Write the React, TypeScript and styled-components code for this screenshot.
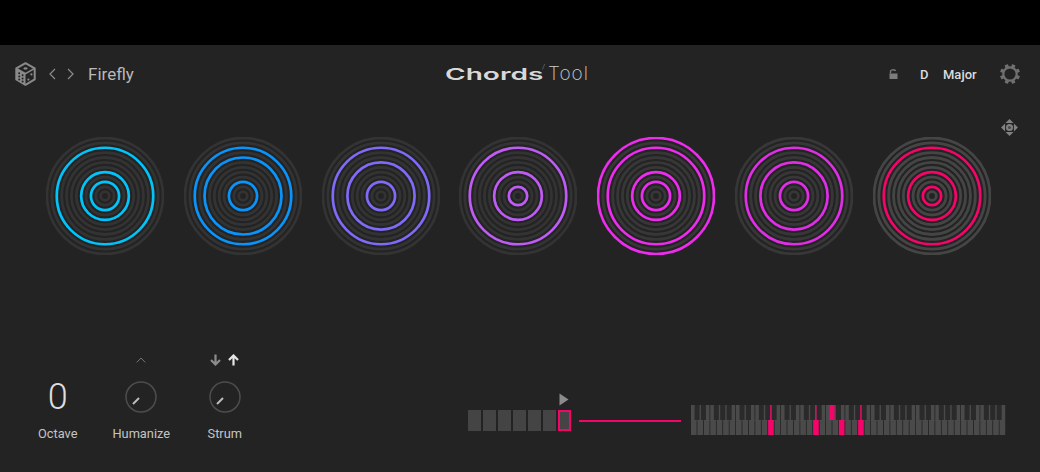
import { FC } from "react";
import styled, { createGlobalStyle } from "styled-components";

const PINK = "#f5056a";

const chords = [
    { color: "#00c4fa", active: [2, 7, 9], base: "#333333" },
    { color: "#0a94fb", active: [2, 4, 9], base: "#333333" },
    { color: "#7e6bf7", active: [2, 5, 9], base: "#333333" },
    { color: "#bf5cf5", active: [2, 7, 10], base: "#333333" },
    { color: "#ee2cee", active: [0, 2, 7, 9], base: "#373737" },
    { color: "#e02ee6", active: [2, 5, 9], base: "#373737" },
    { color: "#f5056a", active: [2, 7, 10], base: "#454545" },
];

const GlobalStyle = createGlobalStyle`
    html, body {
        margin: 0;
        padding: 0;
        background: #000;
        font-family: Roboto, "Liberation Sans", sans-serif;
    }
`;

const Page = styled.div`
    width: 1040px;
    height: 472px;
    padding-top: 45px;
    box-sizing: border-box;
    background: #000;
    overflow: hidden;
`;

const Panel = styled.div`
    height: 427px;
    background: #232323;
    display: flex;
    flex-direction: column;
`;

const Header = styled.header`
    height: 58px;
    display: grid;
    grid-template-columns: 1fr auto 1fr;
    align-items: center;
    padding: 0 20px 0 15px;
`;

const HeaderLeft = styled.div`
    display: flex;
    align-items: center;
`;

const HeaderRight = styled.div`
    display: flex;
    align-items: center;
    justify-content: flex-end;
`;

const NavGroup = styled.div`
    display: flex;
    align-items: center;
    gap: 11px;
    margin: 0 14px 0 13px;
`;

const PresetName = styled.span`
    font-size: 17px;
    color: #b9b9b9;
`;

const Logo = styled.div`
    display: flex;
    align-items: flex-start;
    color: #d8d8d8;
    line-height: 18px;
`;

const LogoBold = styled.span`
    display: inline-block;
    width: 97px;
    margin-left: -1px;
    font-family: Inter, sans-serif;
    font-weight: 600;
    font-size: 16.5px;
    transform: scaleX(1.7);
    transform-origin: left center;
`;

const LogoSlash = styled.span`
    font-size: 8px;
    font-weight: 300;
    line-height: 8px;
    width: 6px;
    color: #999;
    margin-top: -2px;
`;

const LogoLight = styled.span`
    font-family: Inter, sans-serif;
    font-weight: 200;
    font-size: 19px;
    letter-spacing: 1px;
    color: #cccccc;
`;

const KeyName = styled.span<{ $width: number }>`
    font-size: 13px;
    font-weight: 500;
    color: #dcdcdc;
    width: ${(p) => p.$width}px;
`;

const MoveRow = styled.div`
    height: 34px;
    display: flex;
    justify-content: flex-end;
    padding: 16px 22px 0 0;
    box-sizing: border-box;
`;

const Rings = styled.div`
    display: flex;
    gap: 19.83px;
    padding-left: 46px;
`;

const Bottom = styled.div`
    margin-top: auto;
    height: 122px;
    display: flex;
    justify-content: space-between;
    padding: 0 33px 0 16px;
`;

const Controls = styled.div`
    display: flex;
`;

const Control = styled.div`
    width: 83.5px;
    display: flex;
    flex-direction: column;
    align-items: center;
`;

const Indicator = styled.div`
    height: 16px;
    margin-top: 2px;
    display: flex;
    align-items: center;
    gap: 7px;
`;

const ValueArea = styled.div`
    height: 44px;
    margin-top: 7px;
    display: flex;
    align-items: center;
    justify-content: center;
    font-size: 36px;
    font-weight: 300;
    color: #dedede;
`;

const Label = styled.div`
    margin-top: 7px;
    font-size: 12.8px;
    color: #c4c4c4;
    line-height: 16px;
`;

const Sequencer = styled.div`
    display: flex;
    flex-direction: column;
    align-items: flex-start;
`;

const PlayRow = styled.div`
    display: flex;
    justify-content: flex-end;
    width: 101px;
    height: 13px;
    margin-top: 43px;
    margin-bottom: 4px;
`;

const StepRow = styled.div`
    display: flex;
    gap: 2px;
`;

const Step = styled.div<{ $current?: boolean }>`
    width: 13px;
    height: 21px;
    box-sizing: border-box;
    background: #444;
    border: ${(p) => (p.$current ? `2px solid ${PINK}` : "none")};
`;

const RightGroup = styled.div`
    display: flex;
`;

const Connector = styled.div`
    width: 102px;
    height: 1.5px;
    margin: 70px 10px 0 8px;
    background: ${PINK};
`;

const KeyboardWrap = styled.div`
    padding-top: 55px;
`;

const Ring: FC<{ color: string; active: number[]; base: string }> = ({ color, active, base }) => {
    const radii = Array.from({ length: 12 }, (_, i) => 58 - i * 4.88);
    return (
        <svg width="118" height="118" viewBox="-59 -59 118 118">
            {radii.map((r, i) => (
                <circle
                    key={i}
                    r={r}
                    fill="none"
                    stroke={active.includes(i) ? color : base}
                    strokeWidth={active.includes(i) ? 2.7 : 2.8}
                />
            ))}
        </svg>
    );
};

const Dice = () => (
    <svg width="21" height="24" viewBox="0 0 21 24">
        <path d="M1.3 6.4 L10.5 11.6 V22.8 L1.3 17.4 Z" fill="#8a8a8a" />
        <path d="M10.5 1.2 L19.7 6.4 V17.4 L10.5 22.8 L1.3 17.4 V6.4 Z" fill="none" stroke="#8a8a8a" strokeWidth="2" strokeLinejoin="round" />
        <path d="M1.3 6.4 L10.5 11.6 L19.7 6.4" fill="none" stroke="#8a8a8a" strokeWidth="1.6" />
        <ellipse cx="10.5" cy="6.4" rx="2" ry="1.2" fill="#8a8a8a" />
        <circle cx="4.2" cy="11.2" r="1" fill="#232323" />
        <circle cx="7.6" cy="13.2" r="1" fill="#232323" />
        <circle cx="4.2" cy="14.4" r="1" fill="#232323" />
        <circle cx="7.6" cy="16.4" r="1" fill="#232323" />
        <circle cx="4.2" cy="17.4" r="1" fill="#232323" />
        <circle cx="7.6" cy="19.4" r="1" fill="#232323" />
        <circle cx="16.4" cy="12.4" r="1.1" fill="#8a8a8a" />
        <circle cx="13.4" cy="17.6" r="1.1" fill="#8a8a8a" />
    </svg>
);

const Chevron: FC<{ dir: "left" | "right" }> = ({ dir }) => (
    <svg width="7" height="12" viewBox="0 0 7 12">
        <path d={dir === "left" ? "M6 1 L1 6 L6 11" : "M1 1 L6 6 L1 11"} fill="none" stroke="#8c8c8c" strokeWidth="1.2" />
    </svg>
);

const Lock = () => (
    <svg width="9" height="10" viewBox="0 0 9 10" style={{ marginRight: 22 }}>
        <rect x="0.5" y="4.5" width="8" height="5.5" fill="#7c7c7c" />
        <path d="M1.5 4.5 V2.4 C1.5 0.4 6 0.2 6.6 2" fill="none" stroke="#7c7c7c" strokeWidth="1.3" />
    </svg>
);

const Gear = () => {
    const teeth = Array.from({ length: 8 }, (_, i) => i * 45);
    return (
        <svg width="20" height="20" viewBox="-10 -10 20 20" style={{ marginLeft: 23 }}>
            <circle r="6.7" fill="none" stroke="#707070" strokeWidth="2.2" />
            {teeth.map((a) => (
                <rect key={a} x="-1.8" y="-10" width="3.6" height="3" rx="0.5" fill="#707070" transform={`rotate(${a + 22.5})`} />
            ))}
        </svg>
    );
};

const Move = () => (
    <svg width="17" height="17" viewBox="-8.5 -8.5 17 17">
        <path d="M0 -8.4 L4 -4.4 H-4 Z M0 8.4 L4 4.4 H-4 Z M-8.4 0 L-4.4 -4 V4 Z M8.4 0 L4.4 -4 V4 Z" fill="#828282" />
        <circle r="3.5" fill="#828282" />
        <circle r="1.6" fill="#4a4a4a" />
    </svg>
);

const Knob = () => (
    <svg width="32" height="32" viewBox="-16 -16 32 32">
        <circle r="15" fill="none" stroke="#4d4d4d" strokeWidth="1.5" />
        <line x1="-8" y1="7" x2="-2" y2="1" stroke="#bdbdbd" strokeWidth="2" />
    </svg>
);

const Arrow: FC<{ up?: boolean; color: string }> = ({ up, color }) => (
    <svg width="11" height="12" viewBox="0 0 11 12">
        <path
            d={up ? "M5.5 11.5 V1.5 M1 6 L5.5 1.5 L10 6" : "M5.5 0.5 V10.5 M1 6 L5.5 10.5 L10 6"}
            fill="none"
            stroke={color}
            strokeWidth="2.2"
        />
    </svg>
);

// blacks sit after these white indexes inside an octave
const BLACK_AFTER = [0, 1, 3, 4, 5];
const PINK_WHITES = [12, 19, 23, 26];
const PINK_TOPS = [12, 19, 26];
const PINK_BLACKS = [21];

const Keyboard = () => {
    const w = 315 / 49;
    const whites = Array.from({ length: 49 }, (_, i) => i);
    const blacks = whites.filter((i) => BLACK_AFTER.includes(i % 7));
    return (
        <svg width="316" height="31" viewBox="0 0 316 31">
            {whites.map((i) => (
                <g key={i}>
                    <rect x={i * w} y={0} width={w - 0.8} height={16} fill="#4a4a4a" />
                    <rect x={i * w} y={15} width={w - 0.8} height={15} fill={PINK_WHITES.includes(i) ? PINK : "#4a4a4a"} />
                </g>
            ))}
            {blacks.map((i) => (
                <rect
                    key={i}
                    x={(i + 1) * w - 2.9}
                    y={0}
                    width={5}
                    height={15}
                    fill={PINK_BLACKS.includes(i) ? PINK : "#2a2a2a"}
                />
            ))}
            {PINK_TOPS.map((i) => (
                <rect key={i} x={i * w + 2.1} y={0} width={1.2} height={15} fill={PINK} />
            ))}
        </svg>
    );
};

const PlayIcon = () => (
    <svg width="10" height="13" viewBox="0 0 10 13">
        <path d="M0.5 0.5 L9.5 6.5 L0.5 12.5 Z" fill="#8c8c8c" />
    </svg>
);

const App: FC = () => {
    return (
        <Page>
            <GlobalStyle />
            <Panel>
                <Header>
                    <HeaderLeft>
                        <Dice />
                        <NavGroup>
                            <Chevron dir="left" />
                            <Chevron dir="right" />
                        </NavGroup>
                        <PresetName>Firefly</PresetName>
                    </HeaderLeft>
                    <Logo>
                        <LogoBold>Chords</LogoBold>
                        <LogoSlash>/</LogoSlash>
                        <LogoLight>Tool</LogoLight>
                    </Logo>
                    <HeaderRight>
                        <Lock />
                        <KeyName $width={23}>D</KeyName>
                        <KeyName $width={34}>Major</KeyName>
                        <Gear />
                    </HeaderRight>
                </Header>
                <MoveRow>
                    <Move />
                </MoveRow>
                <Rings>
                    {chords.map((c) => (
                        <Ring key={c.color} color={c.color} active={c.active} base={c.base} />
                    ))}
                </Rings>
                <Bottom>
                    <Controls>
                        <Control>
                            <Indicator />
                            <ValueArea>0</ValueArea>
                            <Label>Octave</Label>
                        </Control>
                        <Control>
                            <Indicator>
                                <svg width="10" height="6" viewBox="0 0 10 6">
                                    <path d="M0.8 5.4 L5 1 L9.2 5.4" fill="none" stroke="#777" strokeWidth="1" />
                                </svg>
                            </Indicator>
                            <ValueArea>
                                <Knob />
                            </ValueArea>
                            <Label>Humanize</Label>
                        </Control>
                        <Control>
                            <Indicator>
                                <Arrow color="#8c8c8c" />
                                <Arrow up color="#e6e6e6" />
                            </Indicator>
                            <ValueArea>
                                <Knob />
                            </ValueArea>
                            <Label>Strum</Label>
                        </Control>
                    </Controls>
                    <RightGroup>
                        <Sequencer>
                            <PlayRow>
                                <PlayIcon />
                            </PlayRow>
                            <StepRow>
                                {Array.from({ length: 7 }, (_, i) => (
                                    <Step key={i} $current={i === 6} />
                                ))}
                            </StepRow>
                        </Sequencer>
                        <Connector />
                        <KeyboardWrap>
                            <Keyboard />
                        </KeyboardWrap>
                    </RightGroup>
                </Bottom>
            </Panel>
        </Page>
    );
};

export default App;
